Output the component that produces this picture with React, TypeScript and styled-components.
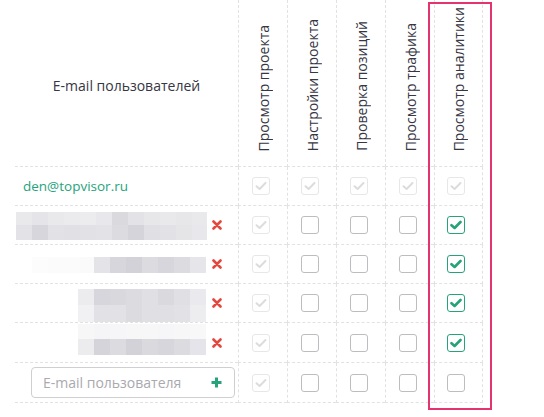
import React from 'react';
import styled, { createGlobalStyle } from 'styled-components';

const Global = createGlobalStyle`
  html, body { margin: 0; padding: 0; background: #fff; }
  body { font-family: "Open Sans", "Liberation Sans", sans-serif; }
  * { box-sizing: border-box; }
`;

const LINE = '#e2e2e4';
const GREEN = '#26a37b';

const Page = styled.div`
  position: relative;
  width: 544px;
  height: 417px;
  padding-left: 15px;
  overflow: hidden;
`;

const Table = styled.div`
  display: grid;
  grid-template-columns: 223px repeat(5, 49px);
`;

const EmailHead = styled.div`
  height: 167px;
  border-bottom: 1px dashed ${LINE};
  display: flex;
  align-items: center;
  justify-content: center;
  padding-top: 4px;
  font-size: 14px;
  color: #363644;
`;

const PermHead = styled.div<{ $last?: boolean }>`
  height: 167px;
  border-bottom: 1px dashed ${LINE};
  border-left: 1px dashed ${LINE};
  border-right: ${(p) => (p.$last ? `1px dashed ${LINE}` : 'none')};
  display: flex;
  align-items: flex-end;
  justify-content: center;
  padding-bottom: 15px;
`;

const HeadLabel = styled.span`
  writing-mode: vertical-rl;
  transform: rotate(180deg);
  font-size: 14px;
  color: #363644;
  white-space: nowrap;
`;

const EmailCell = styled.div<{ $h: number }>`
  height: ${(p) => p.$h}px;
  border-bottom: 1px dashed ${LINE};
  display: flex;
  align-items: center;
  justify-content: space-between;
  padding-right: 16px;
`;

const OwnerEmail = styled.span`
  font-size: 13.5px;
  color: ${GREEN};
  padding-left: 8px;
`;

const PermCell = styled.div<{ $h: number; $last?: boolean }>`
  height: ${(p) => p.$h}px;
  border-bottom: 1px dashed ${LINE};
  border-left: 1px dashed ${LINE};
  border-right: ${(p) => (p.$last ? `1px dashed ${LINE}` : 'none')};
  display: flex;
  align-items: center;
  justify-content: center;
  padding-right: 5px;
`;

type BoxState = 'locked' | 'off' | 'on';

const Box = styled.span<{ $state: BoxState }>`
  width: 18px;
  height: 18px;
  border-radius: 3px;
  border: 1px solid
    ${(p) => (p.$state === 'locked' ? '#e7e7e9' : p.$state === 'on' ? GREEN : '#bdbdc0')};
  display: flex;
  align-items: center;
  justify-content: center;
  background: #fff;
`;

const Highlight = styled.div`
  position: absolute;
  left: 428px;
  top: 2px;
  width: 64px;
  height: 408px;
  border: 2px solid #e4346f;
  pointer-events: none;
`;

const RemoveBtn = styled.span`
  display: flex;
  width: 10px;
  height: 10px;
`;

const InputWrap = styled.div`
  margin-left: 16px;
  margin-right: -13px;
  flex: 1;
  height: 31px;
  border: 1px solid #cfcfd2;
  border-radius: 4px;
  display: flex;
  align-items: center;
  justify-content: space-between;
  padding: 0 12px 0 11px;
`;

const Placeholder = styled.span`
  font-size: 14px;
  color: #a9a9ae;
`;

const Mosaic = styled.svg`
  display: block;
  flex: none;
`;

function Check({ state }: { state: BoxState }) {
  return (
    <Box $state={state}>
      {state !== 'off' && (
        <svg width="12" height="10" viewBox="0 0 12 10">
          <path
            d="M1.5 5.2 L4.6 8 L10.5 2"
            fill="none"
            stroke={state === 'on' ? GREEN : '#dcdcdf'}
            strokeWidth={state === 'on' ? 2.6 : 2}
            strokeLinecap="round"
            strokeLinejoin="round"
          />
        </svg>
      )}
    </Box>
  );
}

function Cross() {
  return (
    <RemoveBtn>
      <svg width="10" height="10" viewBox="0 0 10 10">
        <path d="M1.5 1.5 L8.5 8.5 M8.5 1.5 L1.5 8.5" stroke="#e2483d" strokeWidth="2.6" strokeLinecap="round" />
      </svg>
    </RemoveBtn>
  );
}

function Plus() {
  return (
    <svg width="11" height="11" viewBox="0 0 11 11">
      <path d="M5.5 0.5 V10.5 M0.5 5.5 H10.5" stroke={GREEN} strokeWidth="3" />
    </svg>
  );
}

type MosaicRow = { y: number; h: number; x: number; cells: string[] };

const mosaics: MosaicRow[][] = [
  [
    { y: 6, h: 13, x: 1, cells: ['e9e9ec', 'e5e5e9', 'e9e9ec', 'ebebee', 'ececef', 'e8e8ec', 'dadade', 'e3e3e7', 'e7e7ea', 'e9e9ec', 'e7e7ea', 'e9e9ec'] },
    { y: 19, h: 15, x: 1, cells: ['e3e3e7', 'd6d6dc', 'e2e2e6', 'e1e1e5', 'e2e2e6', 'e3e3e7', 'dcdce0', 'd4d4da', 'e0e0e4', 'e2e2e6', 'e5e5e8', 'e8e8ec'] },
  ],
  [
    { y: 12, h: 16, x: 17, cells: ['fcfcfd', 'fbfbfc', 'fbfbfc', 'fafafb'] },
    { y: 12, h: 16, x: 79, cells: ['e4e4e8', 'd6d6dc', 'd2d2d8', 'dcdce0', 'd6d6dc', 'dcdce0', 'e6e6ea'] },
  ],
  [
    { y: 5, h: 16, x: 63, cells: ['ececef', 'd6d6dc', 'd8d8dd', 'dcdce0', 'e0e0e4', 'dadade', 'e0e0e4', 'eaeaee'] },
    { y: 21, h: 17, x: 63, cells: ['f1f1f3', 'e2e2e6', 'e2e2e6', 'dcdce0', 'e0e0e4', 'e0e0e4', 'e2e2e6', 'ededf0'] },
  ],
  [
    { y: 0, h: 15, x: 63, cells: ['f7f7f8', 'f5f5f7', 'f6f6f8', 'f7f7f8', 'f7f7f8', 'f6f6f8', 'f7f7f8', 'f8f8f9'] },
    { y: 15, h: 16, x: 63, cells: ['ececef', 'd4d4da', 'dcdce0', 'd2d2d8', 'dadade', 'd6d6dc', 'dcdce0', 'e4e4ea'] },
  ],
];

function Redacted({ rows }: { rows: MosaicRow[] }) {
  return (
    <Mosaic width="192" height="38" viewBox="0 0 192 38">
      {rows.map((r, ri) =>
        r.cells.map((c, ci) => (
          <rect key={`${ri}-${ci}`} x={r.x + ci * 16} y={r.y} width="16" height={r.h} fill={`#${c}`} />
        ))
      )}
    </Mosaic>
  );
}

const perms = ['Просмотр проекта', 'Настройки проекта', 'Проверка позиций', 'Просмотр трафика', 'Просмотр аналитики'];

type Row = { kind: 'owner' | 'user' | 'new'; mosaic?: number; states: BoxState[]; h: number };

const rows: Row[] = [
  { kind: 'owner', states: ['locked', 'locked', 'locked', 'locked', 'locked'], h: 39 },
  { kind: 'user', mosaic: 0, states: ['locked', 'off', 'off', 'off', 'on'], h: 39 },
  { kind: 'user', mosaic: 1, states: ['locked', 'off', 'off', 'off', 'on'], h: 39 },
  { kind: 'user', mosaic: 2, states: ['locked', 'off', 'off', 'off', 'on'], h: 39 },
  { kind: 'user', mosaic: 3, states: ['locked', 'off', 'off', 'off', 'on'], h: 40 },
  { kind: 'new', states: ['locked', 'off', 'off', 'off', 'off'], h: 40 },
];

export default function App() {
  return (
    <>
      <Global />
      <Page>
        <Table>
          <EmailHead>E-mail пользователей</EmailHead>
          {perms.map((p, i) => (
            <PermHead key={p} $last={i === perms.length - 1}>
              <HeadLabel>{p}</HeadLabel>
            </PermHead>
          ))}
          {rows.map((r, ri) => (
            <React.Fragment key={ri}>
              <EmailCell $h={r.h}>
                {r.kind === 'owner' && <OwnerEmail>den@topvisor.ru</OwnerEmail>}
                {r.kind === 'user' && (
                  <>
                    <Redacted rows={mosaics[r.mosaic!]} />
                    <Cross />
                  </>
                )}
                {r.kind === 'new' && (
                  <InputWrap>
                    <Placeholder>E-mail пользователя</Placeholder>
                    <Plus />
                  </InputWrap>
                )}
              </EmailCell>
              {r.states.map((s, ci) => (
                <PermCell key={ci} $h={r.h} $last={ci === 4}>
                  <Check state={s} />
                </PermCell>
              ))}
            </React.Fragment>
          ))}
        </Table>
        <Highlight />
      </Page>
    </>
  );
}
